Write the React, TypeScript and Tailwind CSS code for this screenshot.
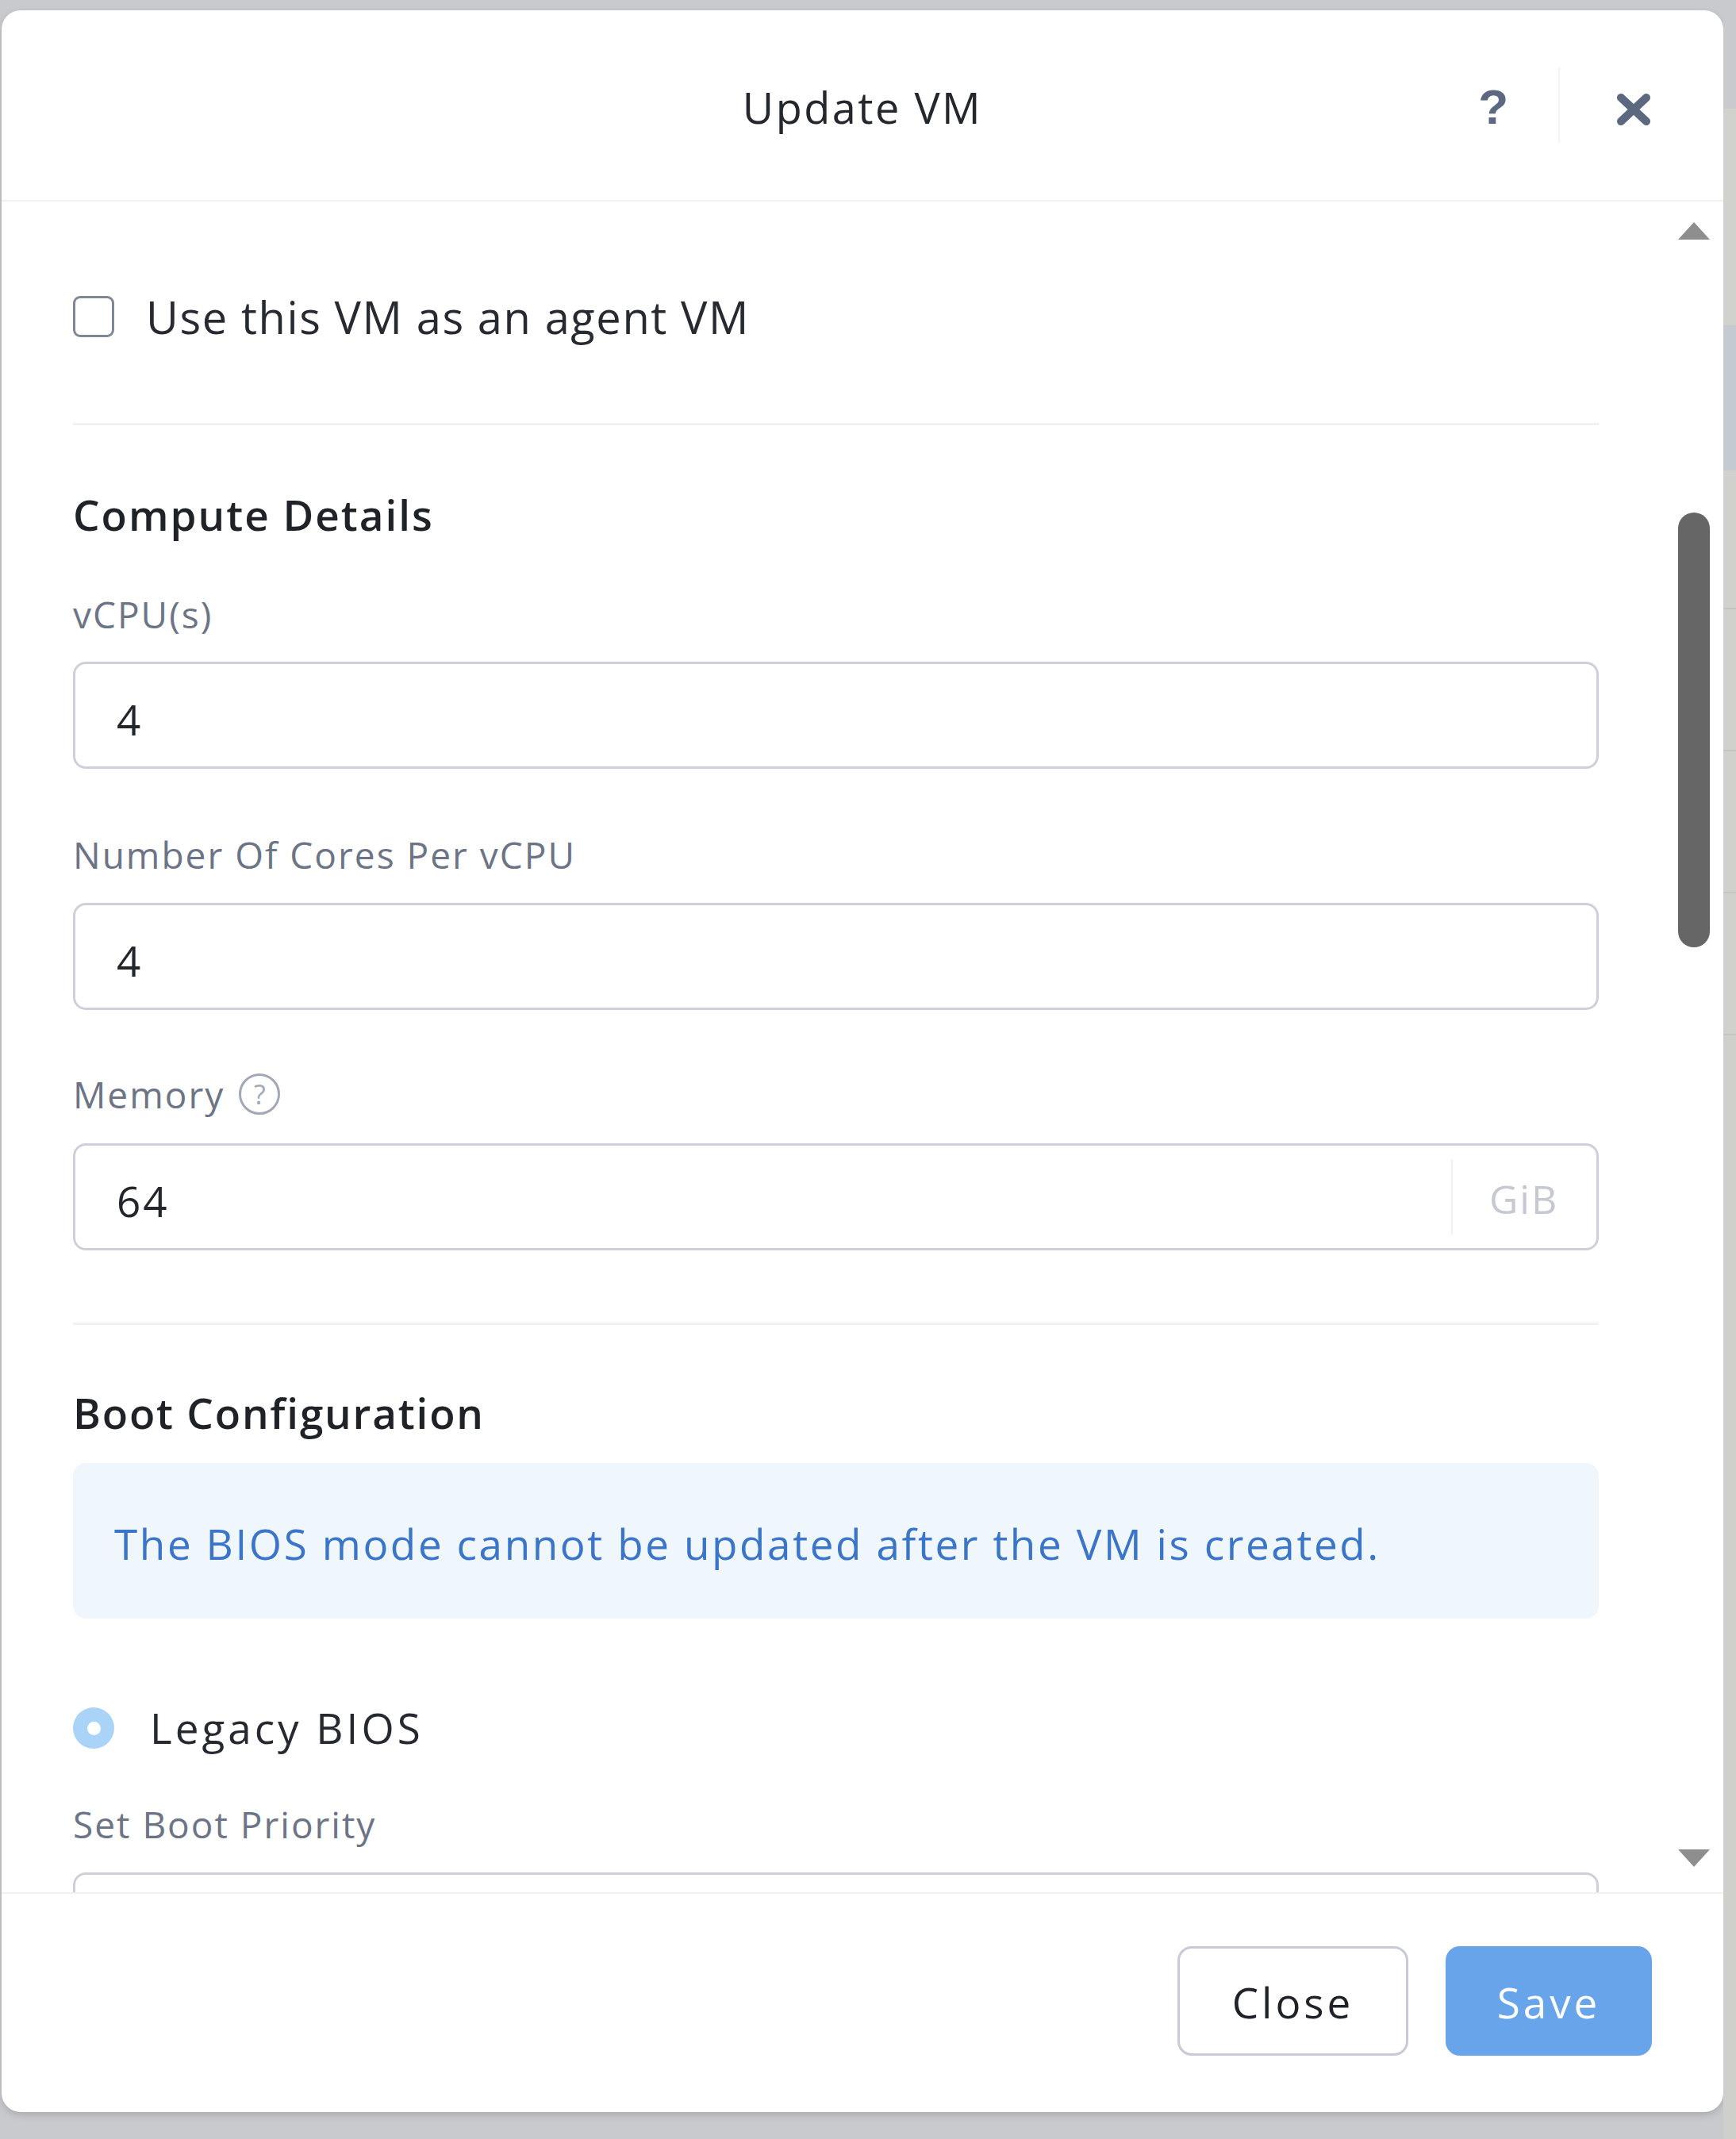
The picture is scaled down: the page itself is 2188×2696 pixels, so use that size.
import React from 'react'

function FieldLabel({ children, mt }: { children: React.ReactNode; mt: string }) {
  return (
    <div className={`${mt} h-[60px] flex items-center text-[46px] text-[#6c7486] tracking-[2px]`}>
      {children}
    </div>
  )
}

function TextField({ value, mt, suffix }: { value: string; mt: string; suffix?: string }) {
  return (
    <div
      className={`${mt} h-[135px] flex items-center rounded-[16px] border-[3px] border-[#cdd0d9] bg-white`}
    >
      <div className="flex-1 pl-[52px] pt-[10px] text-[53px] text-[#23272c] tracking-[3px]">{value}</div>
      {suffix && (
        <div className="flex items-center h-full">
          <div className="w-[2px] h-[95px] bg-[#f0f2ee]" />
          <div className="w-[181px] pl-[46px] pt-[5px] text-[50px] text-[#c6c9d1] tracking-[2px]">{suffix}</div>
        </div>
      )}
    </div>
  )
}

export default function App() {
  return (
    <div className="w-[2188px] h-[2696px] bg-[#c9cacd] flex overflow-hidden font-['Open_Sans',sans-serif]">
      <div className="ml-[2px] mt-[13px] w-[2170px] h-[2649px] shrink-0 bg-white rounded-[24px] shadow-[0_4px_10px_rgba(0,0,0,0.15)] flex flex-col overflow-hidden">
        {/* header */}
        <div className="h-[241px] shrink-0 grid grid-cols-[1fr_auto_1fr] items-center border-b-2 border-[#f1f2ef]">
          <div />
          <h1 className="text-[54px] text-[#24282d] pt-[6px] tracking-[2.5px]">Update VM</h1>
          <div className="flex items-center justify-end pr-[90px]">
            <span className="font-['Liberation_Sans',sans-serif] font-bold text-[62px] leading-none text-[#5b6880] pt-[4px]">
              ?
            </span>
            <div className="ml-[63px] w-[2px] h-[95px] bg-[#f3f4f2]" />
            <svg className="ml-[70px] mt-[10px]" width="46" height="42" viewBox="0 0 46 42">
              <path d="M7 6 L39 36 M39 6 L7 36" stroke="#5b6880" strokeWidth="10" strokeLinecap="round" />
            </svg>
          </div>
        </div>

        {/* body */}
        <div className="h-[2131px] shrink-0 flex">
          <div className="flex-1 overflow-hidden pl-[90px] pr-[100px]">
            <div className="pt-[95px] h-[195px] flex items-center gap-[40px]">
              <div className="w-[52px] h-[52px] rounded-[9px] border-[3px] border-[#7f8794]" />
              <span className="text-[56px] text-[#272b31] tracking-[1.6px]">Use this VM as an agent VM</span>
            </div>

            <div className="mt-[84px] h-[3px] bg-[#f1f2ef]" />

            <div className="mt-[73px] h-[80px] flex items-center text-[53px] font-semibold text-[#1f2328] tracking-[2px]">
              Compute Details
            </div>

            <FieldLabel mt="mt-[55px]">vCPU(s)</FieldLabel>
            <TextField mt="mt-[30px]" value="4" />

            <FieldLabel mt="mt-[78px]">Number Of Cores Per vCPU</FieldLabel>
            <TextField mt="mt-[31px]" value="4" />

            <FieldLabel mt="mt-[76px]">
              Memory
              <span className="ml-[18px] w-[52px] h-[52px] rounded-full border-[3px] border-[#a3a9b4] flex items-center justify-center text-[34px] text-[#a3a9b4] leading-none tracking-normal">
                ?
              </span>
            </FieldLabel>
            <TextField mt="mt-[32px]" value="64" suffix="GiB" />

            <div className="mt-[91px] h-[3px] bg-[#f1f2ef]" />

            <div className="mt-[71px] h-[80px] flex items-center text-[53px] font-semibold text-[#1f2328] tracking-[1.8px]">
              Boot Configuration
            </div>

            <div className="mt-[23px] h-[196px] rounded-[16px] bg-[#eff7fd] flex items-center pl-[52px] pt-[8px] text-[53px] text-[#3b75c9] tracking-[2.6px]">
              The BIOS mode cannot be updated after the VM is created.
            </div>

            <div className="mt-[88px] h-[100px] flex items-center gap-[45px]">
              <div className="w-[52px] h-[52px] rounded-full bg-[#a9d3f7] flex items-center justify-center">
                <div className="w-[17px] h-[17px] rounded-full bg-white" />
              </div>
              <span className="text-[53px] text-[#262a30] tracking-[4px]">Legacy BIOS</span>
            </div>

            <FieldLabel mt="mt-[41px]">Set Boot Priority</FieldLabel>
            <TextField mt="mt-[31px]" value="" />
          </div>

          {/* scrollbar */}
          <div className="w-[40px] mr-[17px] flex flex-col items-center">
            <svg className="mt-[26px]" width="40" height="22" viewBox="0 0 40 22">
              <polygon points="20,0 40,22 0,22" fill="#8e8e8e" />
            </svg>
            <div className="mt-[344px] w-[40px] h-[548px] rounded-full bg-[#666666]" />
            <div className="flex-1" />
            <svg className="mb-[32px]" width="40" height="22" viewBox="0 0 40 22">
              <polygon points="0,0 40,0 20,22" fill="#8e8e8e" />
            </svg>
          </div>
        </div>

        {/* footer */}
        <div className="flex-1 border-t-2 border-[#f1f2ef] flex justify-end items-start pt-[66px] pr-[90px] gap-[47px]">
          <button className="w-[291px] h-[138px] rounded-[18px] border-[3px] border-[#c8cbd4] bg-white text-[53px] text-[#1f2328] tracking-[4px] pt-[4px]">
            Close
          </button>
          <button className="w-[260px] h-[138px] rounded-[18px] bg-[#68a4e9] text-[53px] text-white tracking-[4px] pt-[4px]">
            Save
          </button>
        </div>
      </div>

      {/* page behind the dialog */}
      <div className="flex-1 flex flex-col">
        <div className="h-[137px] bg-[#c9cacd]" />
        <div className="h-[273px] bg-[#d1d2ce]" />
        <div className="h-[183px] bg-[#c3cad0]" />
        <div className="h-[175px] bg-[#d0d1cd] border-b-2 border-[#c4c5c1]" />
        <div className="h-[179px] bg-[#d0d1cd] border-b-2 border-[#c4c5c1]" />
        <div className="h-[179px] bg-[#d0d1cd] border-b-2 border-[#c4c5c1]" />
        <div className="h-[179px] bg-[#d0d1cd] border-b-2 border-[#c4c5c1]" />
        <div className="flex-1 bg-[#cfd0cc]" />
      </div>
    </div>
  )
}
